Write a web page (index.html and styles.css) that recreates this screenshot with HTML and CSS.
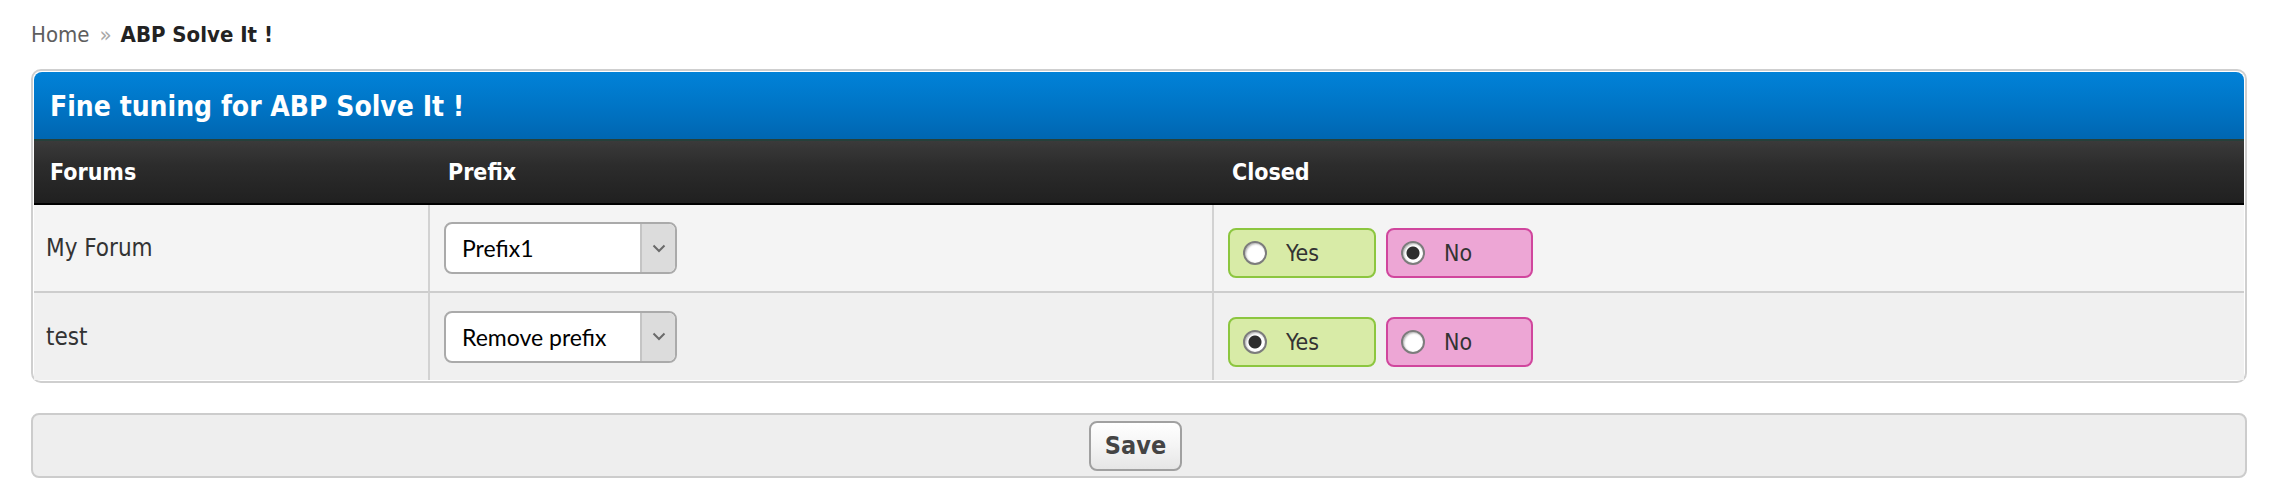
FILE: index.html
```html
<!DOCTYPE html>
<html lang="en">
<head>
<meta charset="utf-8">
<title>Fine tuning for ABP Solve It !</title>
<link rel="stylesheet" href="styles.css">
</head>
<body>
<div class="page">
  <nav class="breadcrumb">
    <a class="crumb" href="#">Home</a><span class="sep">»</span><strong class="current">ABP Solve It !</strong>
  </nav>

  <form class="section">
    <h2 class="section-title">Fine tuning for ABP Solve It !</h2>
    <table class="grid">
      <colgroup>
        <col class="col-forum">
        <col class="col-prefix">
        <col class="col-closed">
      </colgroup>
      <thead>
        <tr>
          <th class="th-forum">Forums</th>
          <th class="th-other">Prefix</th>
          <th class="th-other">Closed</th>
        </tr>
      </thead>
      <tbody>
        <tr class="row row-a">
          <td class="cell cell-forum">My Forum</td>
          <td class="cell cell-prefix">
            <div class="select">
              <span class="select-value">Prefix1</span>
              <span class="select-arrow"><svg width="14" height="9" viewBox="0 0 14 9"><path d="M1.5 1.5 L7 7 L12.5 1.5" fill="none" stroke="#6a6a6a" stroke-width="2"/></svg></span>
            </div>
          </td>
          <td class="cell cell-closed">
            <div class="choices">
              <label class="choice choice-yes"><span class="radio"></span><span class="choice-text">Yes</span></label>
              <label class="choice choice-no"><span class="radio checked"></span><span class="choice-text">No</span></label>
            </div>
          </td>
        </tr>
        <tr class="row row-b">
          <td class="cell cell-forum">test</td>
          <td class="cell cell-prefix">
            <div class="select">
              <span class="select-value">Remove prefix</span>
              <span class="select-arrow"><svg width="14" height="9" viewBox="0 0 14 9"><path d="M1.5 1.5 L7 7 L12.5 1.5" fill="none" stroke="#6a6a6a" stroke-width="2"/></svg></span>
            </div>
          </td>
          <td class="cell cell-closed">
            <div class="choices">
              <label class="choice choice-yes"><span class="radio checked"></span><span class="choice-text">Yes</span></label>
              <label class="choice choice-no"><span class="radio"></span><span class="choice-text">No</span></label>
            </div>
          </td>
        </tr>
      </tbody>
    </table>
  </form>

  <div class="submit-bar">
    <button class="button" type="button">Save</button>
  </div>
</div>
</body>
</html>
```

FILE: styles.css
```css
* {
  box-sizing: border-box;
}

html,
body {
  margin: 0;
  padding: 0;
  background: #ffffff;
}

body {
  font-family: "DejaVu Sans", sans-serif;
  font-stretch: condensed;
  color: #333333;
}

.page {
  padding: 20px 31px 20px 31px;
}

/* breadcrumb */
.breadcrumb {
  height: 30px;
  line-height: 30px;
  font-size: 22px;
  white-space: nowrap;
}

.crumb {
  color: #5e5e5e;
  text-decoration: none;
}

.sep {
  color: #a8a8a8;
  margin: 0 9px 0 10px;
}

.current {
  color: #222222;
  font-weight: bold;
}

/* main section */
.section {
  margin: 19px 0 0 0;
  border: 2px solid #cfcfcf;
  border-radius: 10px;
  padding: 1px;
  background: #ffffff;
}

.section-title {
  margin: 0;
  height: 67px;
  line-height: 69px;
  padding-left: 16px;
  font-size: 28px;
  font-weight: bold;
  color: #ffffff;
  background: linear-gradient(to bottom, #0182d8 0%, #0075c6 50%, #0066b1 100%);
  border-radius: 8px 8px 0 0;
}

.grid {
  width: 100%;
  border-collapse: separate;
  border-spacing: 0;
  table-layout: fixed;
}

.col-forum {
  width: 394px;
}

.col-prefix {
  width: 784px;
}

.grid th {
  height: 66px;
  text-align: left;
  font-size: 23px;
  font-weight: bold;
  color: #ffffff;
  background: linear-gradient(to bottom, #3a3a3a 0%, #2c2c2c 40%, #202020 100%);
  border-top: 2px solid #26403a;
  border-bottom: 2px solid #000000;
  padding: 0;
}

.th-forum {
  padding-left: 16px !important;
}

.th-other {
  padding-left: 20px !important;
}

.cell {
  height: 86px;
  padding: 0;
  vertical-align: middle;
  font-size: 24px;
  color: #333333;
}

.row-a .cell {
  background: #f4f4f4;
}

.row-b .cell {
  background: #f0f0f0;
  border-top: 2px solid #cdcdcd;
  height: 89px;
}

.cell-forum {
  padding-left: 12px !important;
}

.cell-prefix,
.cell-closed {
  border-left: 2px solid #d2d2d2;
  padding-left: 14px !important;
}

/* select */
.select {
  display: flex;
  width: 233px;
  height: 52px;
  border: 2px solid #aaaaaa;
  border-radius: 8px;
  background: #ffffff;
  overflow: hidden;
}

.select-value {
  flex: 1;
  display: flex;
  align-items: center;
  padding-left: 16px;
  font-family: "Lato", "Open Sans", sans-serif;
  font-size: 23px;
  color: #000000;
  white-space: nowrap;
}

.select-arrow {
  width: 35px;
  display: flex;
  align-items: center;
  justify-content: center;
  background: #dcdcdc;
  border-left: 2px solid #c4c4c4;
}

/* radio choices */
.choices {
  display: flex;
  gap: 10px;
  margin-top: 10px;
}

.choice {
  display: flex;
  align-items: center;
  width: 148px;
  height: 50px;
  padding-left: 13px;
  border: 2px solid;
  border-radius: 8px;
  font-size: 23px;
  color: #333333;
}

.choice-yes {
  background: #d8eba7;
  border-color: #8cc63f;
}

.choice-no {
  width: 147px;
  background: #eda6d5;
  border-color: #d0469d;
}

.radio {
  flex: none;
  width: 24px;
  height: 24px;
  border-radius: 50%;
  border: 2px solid #7c7c7c;
  background: #ffffff;
  box-shadow: inset 1px 1px 2px rgba(0, 0, 0, 0.3);
  margin-right: 19px;
}

.radio.checked {
  background: radial-gradient(circle, #2e2e2e 0, #2e2e2e 6px, #ffffff 7px);
}

/* submit bar */
.submit-bar {
  margin-top: 30px;
  height: 65px;
  border: 2px solid #cccccc;
  border-radius: 8px;
  background: #eeeeee;
  display: flex;
  justify-content: center;
  align-items: center;
  padding-right: 7px;
}

.button {
  height: 50px;
  padding: 0 14px;
  border: 2px solid #a0a0a0;
  border-radius: 8px;
  background: linear-gradient(to bottom, #ffffff 0%, #f4f4f4 50%, #e6e6e6 100%);
  font-family: "DejaVu Sans", sans-serif;
  font-stretch: condensed;
  font-size: 25px;
  font-weight: bold;
  color: #444444;
  cursor: pointer;
}
```
